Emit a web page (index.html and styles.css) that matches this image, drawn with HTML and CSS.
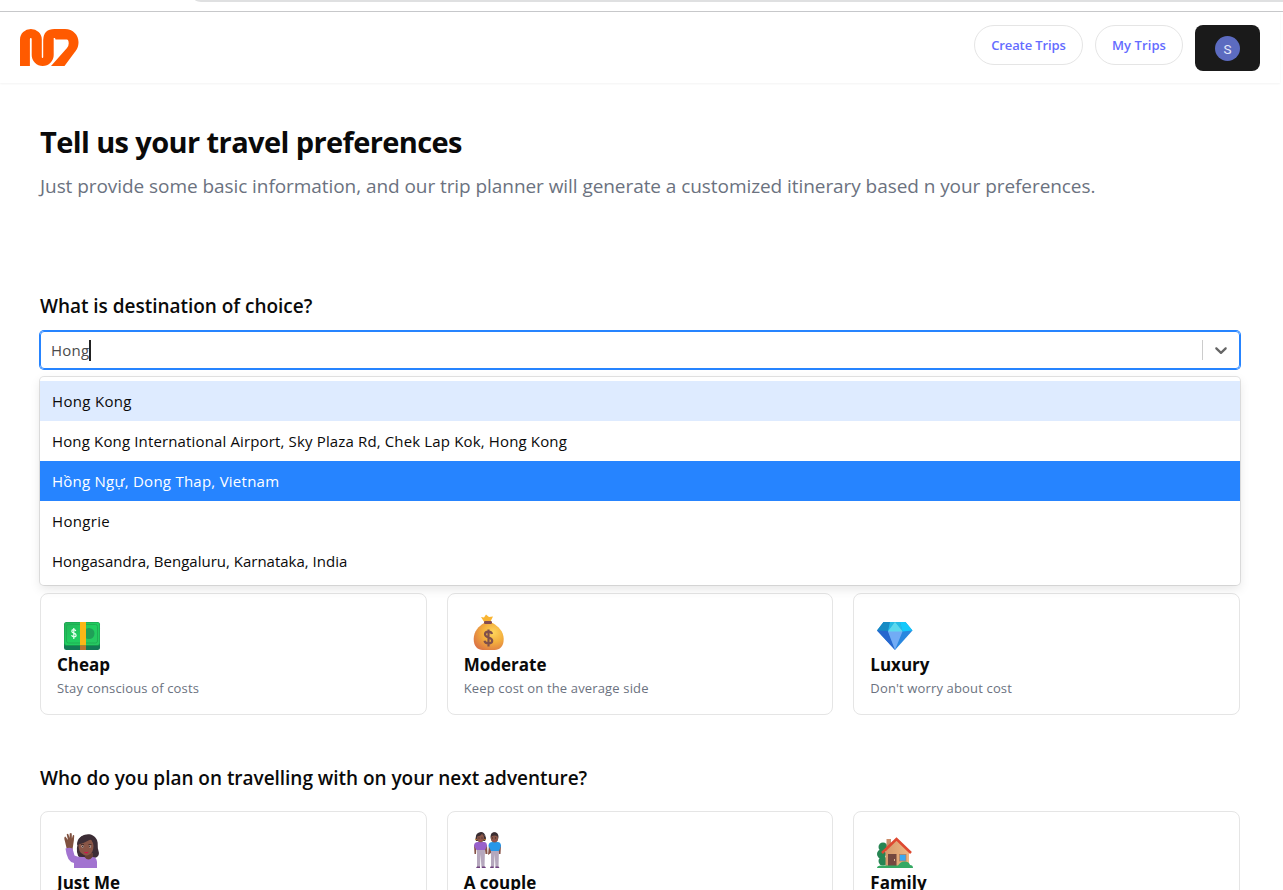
FILE: index.html
```html
<!DOCTYPE html>
<html lang="en">
<head>
<meta charset="utf-8">
<title>Travel preferences</title>
<link rel="stylesheet" href="styles.css">
</head>
<body>
<div class="browser-edge"><div class="address-bar"></div></div>
<header class="header">
  <svg class="logo" viewBox="20 29 59 37.5" aria-label="Logo"><path fill="#ff5a00" d="M20 66V39.5a10.900 10.500 0 0 1 21.800 0V57q0 1 .7 1t.7-1V40Q43.500 29 54.500 29H65c8 0 13.500 6 13.500 13 0 5-1.500 7.500-4 10.500L64.500 66H51L67 48q1.700-2 1.700-4.500 0-4-2-4H55.500l-.5-1.500h-1.300V55a11 11 0 0 1-22 0V39q0-1-.9-1t-.9 1V66z"/></svg>
  <nav class="nav">
    <a class="pill">Create Trips</a>
    <a class="pill pill-my">My Trips</a>
    <button class="account"><span class="avatar">S</span></button>
  </nav>
</header>
<main class="page">
  <h1 class="title">Tell us your travel preferences</h1>
  <p class="subtitle">Just provide some basic information, and our trip planner will generate a customized itinerary based n your preferences.</p>

  <h2 class="question q-destination">What is destination of choice?</h2>
  <div class="select">
    <div class="control">
      <span class="value">Hong</span><span class="caret"></span>
      <span class="divider"></span>
      <svg class="chevron" viewBox="0 0 20 20"><path d="M4.516 7.548c.436-.446 1.043-.481 1.576 0L10 11.295l3.908-3.747c.533-.481 1.141-.446 1.574 0 .436.445.408 1.197 0 1.615l-4.695 4.502c-.217.223-.502.335-.787.335s-.57-.112-.789-.335L4.516 9.163c-.409-.418-.436-1.170 0-1.615z"/></svg>
    </div>
    <div class="menu">
      <div class="option wide focused"><span>Hong Kong</span></div>
      <div class="option medium"><span>Hong Kong International Airport, Sky Plaza Rd, Chek Lap Kok, Hong Kong</span></div>
      <div class="option spaced selected"><span>Hồng Ngự, Dong Thap, Vietnam</span></div>
      <div class="option wide"><span>Hongrie</span></div>
      <div class="option"><span>Hongasandra, Bengaluru, Karnataka, India</span></div>
    </div>
  </div>

  <div class="cards budget">
    <div class="card">
      <svg class="icon" viewBox="0 0 48 40">
        <defs><linearGradient id="bill" x2="1" y2="1"><stop stop-color="#23b457"/><stop offset=".5" stop-color="#20ce60"/><stop offset="1" stop-color="#28c862"/></linearGradient></defs>
        <rect x="7" y="16" width="36" height="24" rx="2.500" fill="#137a55"/>
        <rect x="7" y="12" width="36" height="24" rx="2.500" fill="#17984d"/>
        <rect x="7.500" y="12.500" width="35" height="22.500" rx="2" fill="url(#bill)"/>
        <rect x="9.500" y="14.500" width="31" height="18.500" rx="2" fill="none" stroke="#20ad54"/>
        <circle cx="32" cy="23.500" r="5.500" fill="#1f9f57"/>
        <path d="M23 12h6v23.500h-6z" fill="#fbb717"/><path d="M23 35.500h6V40h-6z" fill="#bd7430"/>
        <path d="M18.800 21c-.5-1.700-4-1.800-4 .2 0 2.500 4.300 1.300 4.300 4 0 2.200-4.100 2.200-4.500 0M16.800 18v11" fill="none" stroke="#e5fff0" stroke-width="1.200"/>
      </svg>
      <h3 class="name">Cheap</h3><p class="desc">Stay conscious of costs</p>
    </div>
    <div class="card">
      <svg class="icon" viewBox="0 0 48 40">
        <defs><radialGradient id="bag" cx=".65" cy=".35" r=".75"><stop stop-color="#ffd65c"/><stop offset=".5" stop-color="#f3ae3d"/><stop offset="1" stop-color="#dc7545"/></radialGradient></defs>
        <path d="m17 7 3 .5L22 4.500l3 2.500 4-.5-3 6h-5.500z" fill="#f9b532"/>
        <path d="M20 13c-5 3-10.300 8-10.300 16 0 7.500 4 11 9 11h12c5 0 9-3.500 9-11 0-8-6-13-11-16z" fill="url(#bag)"/>
        <rect x="20" y="11" width="8" height="3" rx="1.200" fill="#844d50"/>
        <path d="M28 24c-.8-3.200-7-3.200-7 .3 0 4.200 7.200 2.200 7.200 6.400 0 3.600-7 3.600-7.700 0M24.500 19.500v17" fill="none" stroke="#80504a" stroke-width="2.200"/>
      </svg>
      <h3 class="name">Moderate</h3><p class="desc">Keep cost on the average side</p>
    </div>
    <div class="card">
      <svg class="icon" viewBox="0 0 48 40">
        <path d="M13.500 12h22l7 8.500L25 40 7 20.500z" fill="#2987df"/>
        <path d="M13.500 12H20l-2 9.500-11-1z" fill="#168bc4"/>
        <path d="M20 12h10l2.500 9L25 17l-7 4.500z" fill="#26bce5"/>
        <path d="M30 12h5.500l7 8.500-10 1z" fill="#14c9fb"/>
        <path d="M7 20.500 18 21l7 19z" fill="#2767ce"/>
        <path d="m18 21.500 7-9 7.500 9L25 40z" fill="#72acf5"/>
        <path d="m18 21.500 7-9.500 7.500 9.500z" fill="#5cd9ed"/>
      </svg>
      <h3 class="name">Luxury</h3><p class="desc">Don't worry about cost</p>
    </div>
  </div>

  <h2 class="question q-people">Who do you plan on travelling with on your next adventure?</h2>
  <div class="cards">
    <div class="card">
      <svg class="icon" viewBox="0 0 48 40">
        <path d="M21 14c2-9 15-11 19-2 1.500 4 0 7 1.500 11s-1 7-5 7H23q-5-4-2-16z" fill="#3c2d35"/>
        <path d="M10 22 8 13.500Q6.500 9 8.300 8.500L11 12 9.700 6.500q.8-1.500 1.800 0l1 3.500.2-4.500q1.300-1.200 2 0l.2 5 1-3.300q1.500-.8 1.300 1l-.3 4-1.500 9.800z" fill="#80513f"/>
        <path d="M28 25h8v7h-8z" fill="#663f36"/>
        <path d="M8.500 20.500q4-1.500 7 0l2 7q4 2 10 1.500 4 5 8 0 4 0 4.500 5v6H17v-5q-7-1-8.500-14.500z" fill="#a273d0"/>
        <path d="M21.500 17q0-7 8-7 7 1 7 8t-5 9q-3 1.500-6-1-4-2-4-9" fill="#885647"/>
        <path d="M20 17c0-8 7-12 14-9 4 1 5 5 4.500 10-2-1-3-4-4-7q-7 4-14.500 6z" fill="#3c2d35"/>
        <path d="M24 16.500h3m4.500 0h3" stroke="#3a2928" stroke-width=".8"/>
        <circle cx="25.500" cy="18.500" r="1" fill="#eee"/><circle cx="33" cy="18.500" r="1" fill="#eee"/><circle cx="25.700" cy="18.500" r=".7" fill="#2d2021"/><circle cx="32.800" cy="18.500" r=".7" fill="#2d2021"/>
        <path d="M26.500 23.500q3 1 5.500 0-2.500 4-5.500 0" fill="#d0124d"/>
      </svg>
      <h3 class="name">Just Me</h3>
    </div>
    <div class="card">
      <svg class="icon" viewBox="0 0 48 40">
        <path d="M13 21h8l-.5 19h-3L16.500 26l-.5 14h-3zM27 21h8l-.5 19h-3l-.8-14-.7 14h-3z" fill="#b5a7bd"/>
        <path d="M10 17h2.500l-.5 9h-1.500zM20.500 17H23l.5 9h-2zM25 17h2v8l-3 2zM34.500 17H37l-.5 9H35z" fill="#875247"/>
        <path d="M10 18q0-4 4-4h6q3 0 3 4l-2 4H12.500z" fill="#9860cb"/>
        <path d="M24.500 18q0-4 4-4h5q3.500 0 3.500 4l-2 5h-8z" fill="#2897e9"/>
        <path d="M12 13q-1-2 0-5 5-7 9 0 2 2 0 5z" fill="#3a2d31"/><ellipse cx="16.500" cy="10" rx="3.500" ry="4.300" fill="#8a574a"/>
        <ellipse cx="30.500" cy="9" rx="4" ry="4.800" fill="#3a2d31"/><ellipse cx="30.500" cy="10.500" rx="3.500" ry="4" fill="#8a574a"/>
        <path d="M12 8.500q5 0 6-3 3 2 4 4-2-7-7-5-3 1-3 4M27 8.500q4-2 7 0-1-4.500-4-4-3 0-3 4" fill="#3a2d31"/>
        <path d="M14.500 10h1m2 0h1m9.500 0h1m2 0h1" stroke="#291c1d" stroke-width=".8"/><path d="M15.500 12.500h2m12 0h2" stroke="#c0404e" stroke-width=".8"/>
        <circle cx="12" cy="11.500" r=".8" fill="#d58a35"/><circle cx="21" cy="11.500" r=".8" fill="#d58a35"/>
        <path d="M13 38.500h3V40h-4zM18 38.500h3l1 1.500h-4zM26.500 38.500h3V40h-3.500zM31.500 38.500h3l1 1.500h-4z" fill="#70427f"/>
      </svg>
      <h3 class="name">A couple</h3>
    </div>
    <div class="card">
      <svg class="icon" viewBox="0 0 48 40">
        <defs><linearGradient id="wall"><stop stop-color="#d4996b"/><stop offset="1" stop-color="#efb783"/></linearGradient></defs>
        <g fill="#268553"><circle cx="13" cy="19" r="4.500"/><circle cx="11.500" cy="26" r="4.500"/><circle cx="13" cy="33" r="4.500"/></g>
        <rect x="16.500" y="11" width="4.500" height="10" fill="#cb8c68"/>
        <path d="m15.500 22 11-10 12.500 11v16H15.500z" fill="url(#wall)"/>
        <path d="m12 25 14.500-14L41 25" fill="none" stroke="#de4931" stroke-width="2.600"/>
        <rect x="18" y="26" width="8.500" height="12" fill="#74483f"/><path d="M24.500 31v2" stroke="#ddb48f"/>
        <rect x="29.500" y="26.500" width="6.500" height="6.500" fill="#3ba9f1" stroke="#b77b56" stroke-width=".7"/>
        <path d="M7 40q0-2.500 4-2.500h17q3-4.500 7-4 4 0 5 3.500 3 0 3 3z" fill="#35a963"/>
      </svg>
      <h3 class="name">Family</h3>
    </div>
  </div>
</main>
</body>
</html>
```
FILE: styles.css
```css
* { box-sizing: border-box; }
body { margin: 0; height: 890px; overflow: hidden; background: #fff; color: #0a0a0a; font-family: "Open Sans", "Noto Sans", sans-serif; }
h1, h2, h3, p { margin: 0; }
.browser-edge { height: 12px; border-bottom: 1px solid #c7c8ca; padding-left: 195px; }
.address-bar { height: 2px; background: #dfe0e1; border-bottom-left-radius: 10px 2px; }
.header { width: 1280px; height: 71px; padding: 13px 20px 0; display: flex; justify-content: space-between; align-items: flex-start; box-shadow: 0 1px 2px rgba(0,0,0,.05); }
.logo { width: 59px; height: 37.500px; margin-top: 4px; }
.nav { display: flex; gap: 12px; align-items: flex-start; }
.pill { width: 109px; height: 40px; border: 1px solid #e5e5e5; border-radius: 20px; display: flex; align-items: center; justify-content: center; color: #646cff; font-size: 13px; font-weight: 600; letter-spacing: -.1px; white-space: nowrap; }
.pill-my { width: 88px; letter-spacing: .1px; }
.account { width: 65px; height: 46px; padding: 0; border: 0; border-radius: 8px; background: #1a1a1a; display: flex; align-items: center; justify-content: center; }
.avatar { width: 25px; height: 25px; border-radius: 50%; background: #5c6bc0; color: #e5e9fa; font: 13.500px/26px Roboto, sans-serif; text-align: center; }
.page { width: 1200px; margin: 41px 0 0 40px; }
.title { font-size: 29px; line-height: 36px; font-weight: 700; letter-spacing: -.6px; white-space: nowrap; }
.subtitle { margin-top: 12px; font-size: 19px; line-height: 28px; letter-spacing: -.064px; color: #6b7280; white-space: nowrap; }
.question { font-size: 19px; line-height: 28px; font-weight: 600; letter-spacing: -.03px; white-space: nowrap; }
.q-destination { margin-top: 92px; }
.select { position: relative; margin-top: 11px; }
.control { height: 38px; border: 1px solid #2684ff; border-radius: 4px; box-shadow: 0 0 0 1px #2684ff; display: flex; align-items: center; padding-left: 10px; }
.value { font-size: 15px; letter-spacing: .25px; color: #4b4b4b; }
.caret { width: 2px; height: 21px; margin-left: -.5px; background: #222; }
.divider { width: 1px; height: 20px; background: #ccc; margin-left: auto; }
.chevron { width: 20px; height: 20px; margin: 0 8px; fill: #666; }
.menu { position: absolute; z-index: 1; top: 46px; left: 0; width: 100%; padding: 4px 0; background: #fff; border-radius: 4px; box-shadow: 0 0 0 1px rgba(0,0,0,.1), 0 4px 11px rgba(0,0,0,.1); }
.option { height: 40px; padding-left: 12px; line-height: 40px; font-size: 15px; white-space: nowrap; }
.wide { letter-spacing: .33px; }
.medium { letter-spacing: .145px; }
.spaced { letter-spacing: .25px; }
.focused { background: #deebff; }
.selected { background: #2684ff; color: #fff; }
.cards { display: grid; grid-template-columns: repeat(3, 1fr); gap: 20px; margin-top: 19px; }
.budget { margin-top: 224px; }
.card { height: 122px; padding: 16px; border: 1px solid #e5e5e5; border-radius: 8px; }
.icon { display: block; width: 48px; height: 40px; }
.name { padding-top: 1px; font-size: 17px; line-height: 27px; font-weight: 700; white-space: nowrap; }
.desc { font-size: 13px; line-height: 20px; letter-spacing: .15px; color: #6b7280; white-space: nowrap; }
.q-people { margin-top: 49px; }
```
